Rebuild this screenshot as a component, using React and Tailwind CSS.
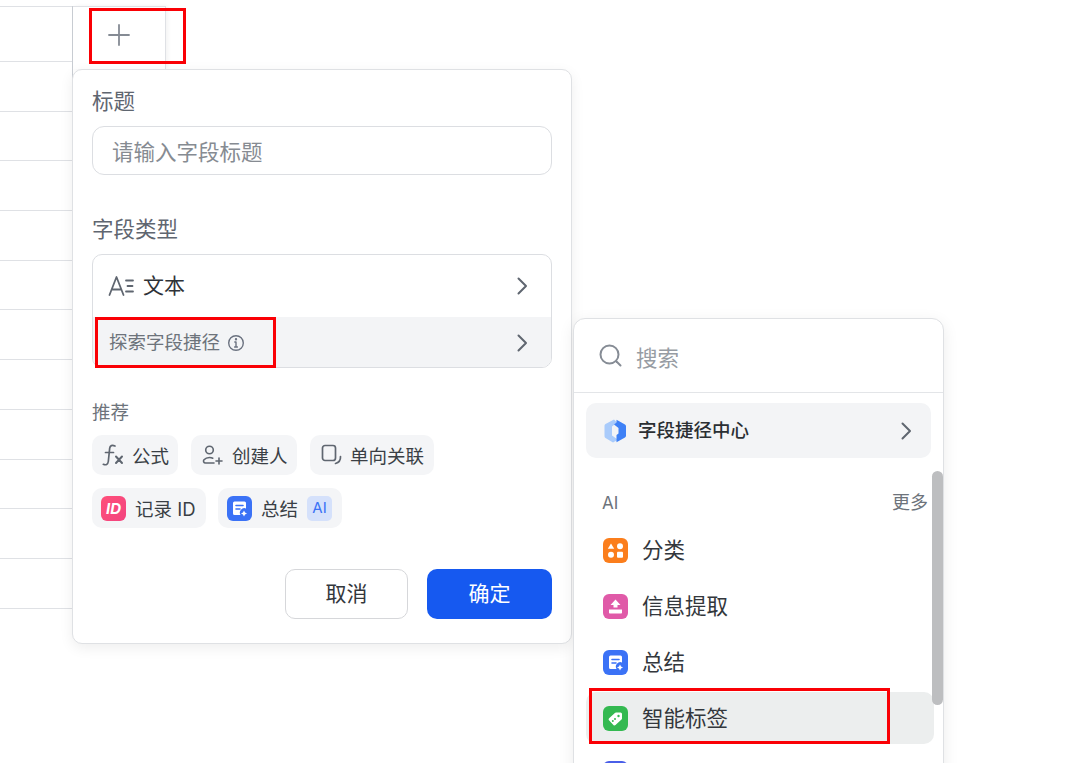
const ROW_LINES = Array.from({ length: 11 });

const Chevron = () => (
  <svg width="16" height="20" viewBox="0 0 16 20" fill="none" stroke="#5f6670" strokeWidth="2" strokeLinecap="round" strokeLinejoin="round">
    <path d="M3.5 2.5 11 10l-7.5 7.5" />
  </svg>
);

const TextIcon = () => (
  <svg width="26" height="22" viewBox="0 0 26 22" fill="none" stroke="#5f6670" strokeWidth="1.8" strokeLinecap="round" strokeLinejoin="round">
    <path d="M1.5 20 8.5 2l7 18M4 14.5h9" />
    <path d="M18 5.500h7M19.500 11h5M18 16.500h7" />
  </svg>
);

const InfoIcon = () => (
  <svg width="18" height="18" viewBox="0 0 18 18" fill="none" stroke="#6b7280" strokeWidth="1.4" strokeLinecap="round">
    <circle cx="9" cy="9" r="7.3" />
    <path d="M9 8v5M7.6 13h2.8M7.8 8H9" />
    <circle cx="9" cy="5.3" r="0.5" fill="#6b7280" />
  </svg>
);

const FxIcon = () => (
  <svg width="22" height="24" viewBox="0 0 22 24" fill="none" stroke="#5f6670" strokeWidth="1.7" strokeLinecap="round" strokeLinejoin="round">
    <path d="M13 3c-3-1.300-5-.4-5.300 2.200L6.300 18.500c-.4 3-2.500 3.900-5 2.800" />
    <path d="M3.500 9.500h8" />
    <path d="m14 13.500 6 6.500M20 13.500 14 20" strokeWidth="2" />
  </svg>
);

const PersonAddIcon = () => (
  <svg width="22" height="22" viewBox="0 0 22 22" fill="none" stroke="#5f6670" strokeWidth="1.6" strokeLinecap="round" strokeLinejoin="round">
    <circle cx="8.500" cy="6" r="3.800" />
    <path d="M13 19H4.500c-1.800 0-2.600-1.900-1.500-3.200 1.300-1.500 3.200-2.300 5.500-2.300 1.200 0 2.300.2 3.300.7" />
    <path d="M18 14v6M15 17h6" />
  </svg>
);

const LinkIcon = () => (
  <svg width="22" height="22" viewBox="0 0 22 22" fill="none" stroke="#5f6670" strokeWidth="1.7" strokeLinecap="round" strokeLinejoin="round">
    <rect x="1.500" y="1.500" width="13" height="15" rx="2.500" />
    <path d="M19.500 12.500c.2 3.500-1.500 6-5 7" />
  </svg>
);

const IdBadge = () => (
  <span className="flex h-[25px] w-[25px] shrink-0 items-center justify-center rounded-[6px] bg-gradient-to-br from-[#ff4f7a] to-[#f2447f] text-[15px] leading-none font-bold text-white italic">
    ID
  </span>
);

const SummaryIcon = ({ size = 25 }) => (
  <svg width={size} height={size} viewBox="0 0 25 25">
    <rect width="25" height="25" rx="6" fill="#3b72f6" />
    <path d="M7.500 5.500h10a1.500 1.500 0 0 1 1.500 1.500v5.500a4.500 4.500 0 0 0-5.500 6.500h-6A1.500 1.500 0 0 1 6 17.500V7a1.500 1.500 0 0 1 1.500-1.500Z" fill="#fff" />
    <path d="M9 9.500h7M9 13h4" stroke="#3b72f6" strokeWidth="1.600" strokeLinecap="round" />
    <path d="M17 14.500l1 2 2 1-2 1-1 2-1-2-2-1 2-1Z" fill="#fff" />
  </svg>
);

const ClassifyIcon = () => (
  <svg width="25" height="25" viewBox="0 0 25 25">
    <rect width="25" height="25" rx="6" fill="#fb7e1c" />
    <path d="M8 5.500l3.200 5.200H4.800Z" fill="#fff" />
    <circle cx="17" cy="8.200" r="3" fill="#fff" />
    <circle cx="8" cy="16.800" r="3" fill="#fff" />
    <rect x="14" y="13.800" width="6" height="6" rx="1" fill="#fff" />
  </svg>
);

const ExtractIcon = () => (
  <svg width="25" height="25" viewBox="0 0 25 25">
    <rect width="25" height="25" rx="6" fill="#e05aa8" />
    <path d="M12.500 5.500 17.500 11H14.500v2.500h-4V11H7.500Z" fill="#fff" />
    <path d="M6 15.500h13v3.200a.8.8 0 0 1-.8.8H6.800a.8.800 0 0 1-.8-.8Z" fill="#fff" />
  </svg>
);

const TagIcon = () => (
  <svg width="25" height="25" viewBox="0 0 25 25">
    <rect width="25" height="25" rx="6" fill="#34b951" />
    <path d="M13 6.500h4.500A1.500 1.500 0 0 1 19 8v4.500a1.500 1.500 0 0 1-.5 1.100l-6 5.500a1.500 1.500 0 0 1-2.100-.1L6 14.300a1.500 1.500 0 0 1 .1-2.100l5.800-5.300a1.500 1.500 0 0 1 1.100-.4Z" fill="#fff" />
    <circle cx="15.500" cy="10" r="1.200" fill="#34b951" />
    <circle cx="12" cy="13" r="1" fill="#34b951" />
    <circle cx="9.800" cy="15" r="1" fill="#34b951" />
  </svg>
);

const CenterLogo = () => (
  <svg width="24" height="24" viewBox="0 0 24 24">
    <path d="M11 .5 2.500 5A2 2 0 0 0 1.500 6.700v10.600a2 2 0 0 0 1 1.700L10 23.500l5-2.800-6-4.200V7.500L14 3.500Z" fill="#a9cbfb" />
    <path d="M13.500.8 22 5.500a2 2 0 0 1 1 1.700v9.600a2 2 0 0 1-1 1.700l-8.500 4.700v-7.200l2-1.500V9L11 5.500l2.500-2Z" fill="#3f81f6" />
  </svg>
);

const Chip = ({ icon, children, className = '' }) => (
  <div className={`flex h-10 items-center rounded-[10px] bg-[#f4f5f7] text-[18.500px] text-[#3a3f45] ${className}`}>
    {icon}
    {children}
  </div>
);

const ListItem = ({ icon, label, active }) => (
  <div className={`flex h-[52px] items-center gap-[14px] rounded-[10px] pl-[17px] text-[21.500px] text-[#33373c] ${active ? '-mr-[3px] bg-[#eceeee]' : ''}`}>
    {icon}
    <span>{label}</span>
  </div>
);

export default function App() {
  return (
    <div className="relative h-[763px] w-[1080px] overflow-hidden bg-white font-['Inter','Noto_Sans_CJK_SC',sans-serif]">
      {/* table behind the popovers */}
      <div className="flex pt-[6px]">
        <div className="h-[602px] w-[73px] border-r border-[#c9cdd3]">
          <div className="h-[56px] border-t border-b border-[#dfe1e5]" />
          {ROW_LINES.map((_, i) => (
            <div key={i} className="h-[49.700px] border-b border-[#dfe1e5]" />
          ))}
        </div>
        <div className="flex h-[63px] w-[93px] items-start border-t border-r border-[#dfe1e5] pt-[17px] pl-[35px] shadow-[2px_0_4px_rgba(0,0,0,0.05)]">
          <svg width="22" height="22" viewBox="0 0 22 22" stroke="#858b94" strokeWidth="1.800" strokeLinecap="round">
            <path d="M11 1v20M1 11h20" />
          </svg>
        </div>
      </div>

      {/* add field popover */}
      <div className="absolute top-[69px] left-[72px] flex h-[575px] w-[500px] flex-col rounded-[10px] border border-[#dfe1e4] bg-white pr-[19px] pl-[19px] shadow-[0_4px_14px_rgba(0,0,0,0.07)]">
        <div className="mt-[16px] text-[21.500px] leading-[30px] text-[#5f6670]">标题</div>
        <div className="mt-[10px] flex h-[49px] items-center rounded-[12px] border-[1.500px] border-[#dcdee2] pt-[3px] pl-[19px] text-[21.500px] text-[#868b92]">
          请输入字段标题
        </div>
        <div className="mt-[39px] text-[21.500px] leading-[30px] text-[#5f6670]">字段类型</div>
        <div className="mt-[10px] h-[114px] overflow-hidden rounded-[10px] border-[1.500px] border-[#dcdee2]">
          <div className="flex h-[62px] items-center pr-[20px] pl-[15px]">
            <TextIcon />
            <span className="ml-[9px] flex-1 text-[21px] text-[#2f3338]">文本</span>
            <Chevron />
          </div>
          <div className="flex h-[51px] items-center bg-[#f3f4f6] pr-[20px] pl-[16px]">
            <span className="pt-[1px] text-[18.500px] text-[#6d737b]">探索字段捷径</span>
            <span className="ml-[7px] flex-1"><InfoIcon /></span>
            <Chevron />
          </div>
        </div>
        <div className="mt-[30px] text-[18.500px] leading-[28px] text-[#6d737b]">推荐</div>
        <div className="mt-[9px] flex gap-[13px]">
          <Chip icon={<FxIcon />} className="w-[86px] gap-[8px] pl-[10px]"><span className="pt-[3px]">公式</span></Chip>
          <Chip icon={<PersonAddIcon />} className="w-[106px] gap-[9px] pl-[10px]"><span className="pt-[3px]">创建人</span></Chip>
          <Chip icon={<LinkIcon />} className="w-[124px] gap-[7px] pl-[11px]"><span className="pt-[3px]">单向关联</span></Chip>
        </div>
        <div className="mt-[13px] flex gap-[12px]">
          <Chip icon={<IdBadge />} className="w-[114px] gap-[9px] pl-[9px]"><span className="pt-[3px]">记录 ID</span></Chip>
          <Chip icon={<SummaryIcon />} className="w-[124px] gap-[9px] pl-[9px]">
            <span className="pt-[3px]">总结</span>
            <span className="flex h-[25px] w-[25px] items-center justify-center rounded-[5px] bg-[#d5e1fb] text-[15px] text-[#3b72f6]">AI</span>
          </Chip>
        </div>
        <div className="mt-[41px] flex justify-end gap-[19px]">
          <button className="h-[50px] w-[123px] rounded-[10px] border-[1.500px] border-[#d6d7da] text-[21px] text-[#33373c]">取消</button>
          <button className="h-[50px] w-[125px] rounded-[10px] bg-[#1659f0] text-[21px] text-white">确定</button>
        </div>
      </div>

      {/* shortcuts popover */}
      <div className="absolute top-[318px] left-[573px] h-[470px] w-[371px] overflow-hidden rounded-[12px] border border-[#dfe1e4] bg-white shadow-[0_4px_16px_rgba(0,0,0,0.08)]">
        <div className="flex h-[74px] items-center gap-[14px] border-b border-[#e3e5e8] pl-[25px]">
          <svg width="23" height="23" viewBox="0 0 23 23" fill="none" stroke="#868c95" strokeWidth="2" strokeLinecap="round">
            <circle cx="10.500" cy="10.500" r="9" />
            <path d="m17.500 17.500 4 4" />
          </svg>
          <span className="pt-[6px] text-[21.500px] text-[#979ca3]">搜索</span>
        </div>
        <div className="mx-[12px] mt-[10px] flex h-[55px] items-center rounded-[10px] bg-[#f3f4f6] pr-[16px] pl-[17px]">
          <CenterLogo />
          <span className="ml-[11px] flex-1 pt-[1px] text-[18.500px] font-medium text-[#2b2f33]">字段捷径中心</span>
          <Chevron />
        </div>
        <div className="flex items-center justify-between pt-[32px] pr-[15px] pl-[28px] text-[#6d737b]">
          <span className="text-[17px] leading-[26px]">AI</span>
          <span className="text-[18px] leading-[26px]">更多</span>
        </div>
        <div className="mx-[12px] mt-[8px] flex flex-col gap-[4px]">
          <ListItem icon={<ClassifyIcon />} label="分类" />
          <ListItem icon={<ExtractIcon />} label="信息提取" />
          <ListItem icon={<SummaryIcon />} label="总结" />
          <ListItem icon={<TagIcon />} label="智能标签" active />
          <div className="mt-[13px] ml-[17px] h-[25px] w-[25px] rounded-[6px] bg-[#4a5fe8]" />
        </div>
        <div className="absolute top-[152px] right-0 h-[234px] w-[11px] rounded-full bg-[#bdbec0]" />
      </div>

      {/* red annotation boxes */}
      <div className="absolute top-[8px] left-[89px] h-[56px] w-[97px] border-[3px] border-[#fa0005]" />
      <div className="absolute top-[317px] left-[95px] h-[51px] w-[181px] border-[3px] border-[#fa0005]" />
      <div className="absolute top-[688px] left-[589px] h-[56px] w-[301px] border-[3px] border-[#fa0005]" />
    </div>
  );
}
